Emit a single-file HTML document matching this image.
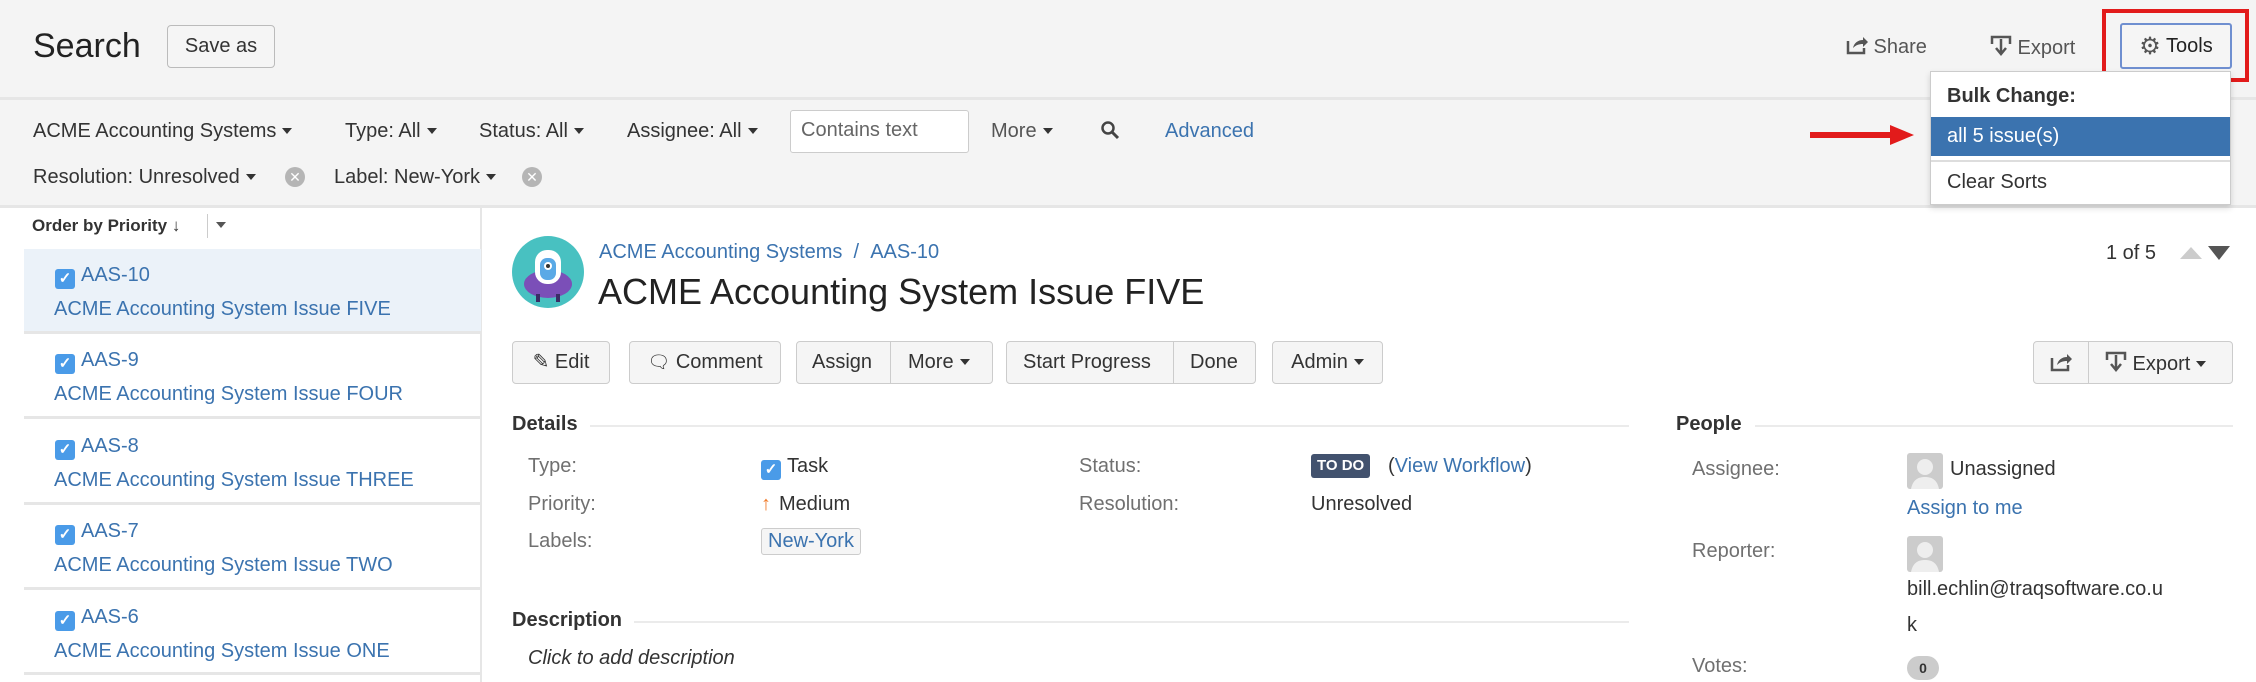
<!DOCTYPE html>
<html><head><meta charset="utf-8"><style>
*{box-sizing:border-box;margin:0;padding:0}
body{width:2256px;height:682px;overflow:hidden;background:#fff;font-family:"Liberation Sans",Arial,sans-serif;color:#333;position:relative}
.a{position:absolute;white-space:nowrap}
.f20{font-size:20px}
.link{color:#3b73af}
.btn{position:absolute;top:341px;height:43px;border:1px solid #ccc;border-radius:4px;background:#f5f5f5;font-size:20px;line-height:41px;text-align:center;color:#333}
.lbl{color:#707070;font-size:20px}
.cb{display:inline-block;width:20px;height:20px;background:#4a9be8;border-radius:3px;color:#fff;font-size:15px;line-height:20px;text-align:center;font-weight:bold;vertical-align:-2px;margin-right:6px}
.x{display:inline-block;width:20px;height:20px;border-radius:50%;background:#b5b5b5;color:#fff;font-size:14px;line-height:20px;text-align:center}
.tri{display:inline-block;border-left:5px solid transparent;border-right:5px solid transparent;border-top:6px solid #333;vertical-align:3px;margin-left:6px}
.item{position:absolute;left:24px;width:457px;height:85px;border-bottom:3px solid #e6e6e6}
</style></head><body>
<div class="a" style="left:0;top:0;width:2256px;height:100px;background:#f4f4f4;border-bottom:3px solid #e6e6e6"></div>
<div class="a" style="left:0;top:100px;width:2256px;height:108px;background:#f4f4f4;border-bottom:3px solid #e6e6e6"></div>
<div class="a" style="left:33px;top:27px;font-size:34px;color:#222">Search</div>
<div class="a" style="left:167px;top:25px;width:108px;height:43px;border:1px solid #bbb;border-radius:4px;background:#f5f5f5;font-size:20px;line-height:41px;text-align:center">Save as</div>
<div class="a f20" style="left:1846px;top:35px;color:#555"><svg width="22" height="20" viewBox="0 0 22 20" style="vertical-align:-2px"><path d="M2 6v12h16v-5" fill="none" stroke="#555" stroke-width="2.5"/><path d="M7 13c1-5 5-8 10-8V2l5 5-5 5V9c-4 0-7 1-10 4z" fill="#555"/></svg> Share</div>
<div class="a f20" style="left:1990px;top:35px;color:#555"><svg width="22" height="22" viewBox="0 0 22 22" style="vertical-align:-3px"><path d="M2 9V2h18v7" fill="none" stroke="#555" stroke-width="2.5"/><path d="M11 4v14M6 13l5 6 5-6" fill="none" stroke="#555" stroke-width="2.5"/></svg> Export</div>
<div class="a" style="left:2102px;top:9px;width:147px;height:73px;border:4px solid #e21b1b"></div>
<div class="a" style="left:2120px;top:23px;width:112px;height:46px;border:2px solid #6f8fd0;border-radius:3px;background:#f5f5f5;font-size:20px;line-height:42px;text-align:center;color:#222"><span style="font-size:24px;color:#555;vertical-align:-2px">⚙</span> Tools</div>
<div class="a" style="left:1930px;top:71px;width:301px;height:134px;background:#fff;border:1px solid #ccc;box-shadow:0 3px 6px rgba(0,0,0,.15)">
<div class="a" style="left:16px;top:13px;font-size:20px;font-weight:bold;color:#333">Bulk Change:</div>
<div class="a" style="left:0;top:45px;width:299px;height:39px;background:#3b73af;color:#fff;font-size:20px;line-height:38px;padding-left:16px">all 5 issue(s)</div>
<div class="a" style="left:0;top:88px;width:299px;border-top:2px solid #ddd"></div>
<div class="a" style="left:16px;top:99px;font-size:20px;color:#333">Clear Sorts</div>
</div>
<svg class="a" style="left:1808px;top:124px" width="108" height="22" viewBox="0 0 108 22"><path d="M2 8h80V1l24 10-24 10v-7H2z" fill="#e21b1b"/></svg>
<div class="a f20" style="left:33px;top:120px;color:#333">ACME Accounting Systems<span class="tri"></span></div>
<div class="a f20" style="left:345px;top:120px">Type: All<span class="tri"></span></div>
<div class="a f20" style="left:479px;top:120px">Status: All<span class="tri"></span></div>
<div class="a f20" style="left:627px;top:120px">Assignee: All<span class="tri"></span></div>
<div class="a" style="left:790px;top:110px;width:179px;height:43px;border:1px solid #ccc;border-radius:3px;background:#fff;font-size:20px;line-height:38px;padding-left:10px;color:#666">Contains text</div>
<div class="a f20" style="left:991px;top:120px;color:#555">More<span class="tri"></span></div>
<svg class="a" style="left:1100px;top:120px" width="20" height="20" viewBox="0 0 20 20"><circle cx="8" cy="8" r="5.5" fill="none" stroke="#444" stroke-width="2.5"/><path d="M12 12l6 6" stroke="#444" stroke-width="3"/></svg>
<div class="a f20 link" style="left:1165px;top:120px">Advanced</div>
<div class="a f20" style="left:33px;top:166px">Resolution: Unresolved<span class="tri"></span></div>
<div class="a" style="left:285px;top:167px"><span class="x">✕</span></div>
<div class="a f20" style="left:334px;top:166px">Label: New-York<span class="tri"></span></div>
<div class="a" style="left:522px;top:167px"><span class="x">✕</span></div>
<div class="a" style="left:480px;top:208px;width:2px;height:474px;background:#e6e6e6"></div>
<div class="a" style="left:32px;top:216px;font-size:17px;font-weight:bold;color:#333">Order by Priority ↓</div>
<div class="a" style="left:207px;top:214px;width:1px;height:24px;background:#ccc"></div>
<div class="a" style="left:216px;top:222px;border-left:5px solid transparent;border-right:5px solid transparent;border-top:6px solid #555"></div>
<div class="item" style="top:249px;background:#ebf2f9"></div>
<div class="item" style="top:334px"></div>
<div class="item" style="top:420px"></div>
<div class="item" style="top:505px"></div>
<div class="item" style="top:590px"></div>
<div class="a f20 link" style="left:55px;top:264px"><span class="cb">✓</span>AAS-10</div>
<div class="a f20 link" style="left:54px;top:298px">ACME Accounting System Issue FIVE</div>
<div class="a f20 link" style="left:55px;top:349px"><span class="cb">✓</span>AAS-9</div>
<div class="a f20 link" style="left:54px;top:383px">ACME Accounting System Issue FOUR</div>
<div class="a f20 link" style="left:55px;top:435px"><span class="cb">✓</span>AAS-8</div>
<div class="a f20 link" style="left:54px;top:469px">ACME Accounting System Issue THREE</div>
<div class="a f20 link" style="left:55px;top:520px"><span class="cb">✓</span>AAS-7</div>
<div class="a f20 link" style="left:54px;top:554px">ACME Accounting System Issue TWO</div>
<div class="a f20 link" style="left:55px;top:606px"><span class="cb">✓</span>AAS-6</div>
<div class="a f20 link" style="left:54px;top:640px">ACME Accounting System Issue ONE</div>
<svg class="a" style="left:512px;top:236px" width="72" height="72" viewBox="0 0 72 72"><circle cx="36" cy="36" r="36" fill="#48c1c1"/><ellipse cx="36" cy="48" rx="24" ry="14" fill="#7b4fb8"/><rect x="23" y="14" width="26" height="34" rx="12" fill="#fff"/><rect x="28" y="22" width="16" height="22" rx="7" fill="#5aa9e6"/><circle cx="36" cy="30" r="4" fill="#fff"/><circle cx="36" cy="30" r="2" fill="#333"/><rect x="24" y="58" width="4" height="8" fill="#3a2c66"/><rect x="44" y="58" width="4" height="8" fill="#3a2c66"/></svg>
<div class="a f20 link" style="left:599px;top:241px">ACME Accounting Systems &nbsp;/ &nbsp;AAS-10</div>
<div class="a" style="left:598px;top:271px;font-size:36px;color:#222">ACME Accounting System Issue FIVE</div>
<div class="a f20" style="left:2106px;top:242px">1 of 5</div>
<div class="a" style="left:2180px;top:247px;border-left:11px solid transparent;border-right:11px solid transparent;border-bottom:12px solid #ccc"></div>
<div class="a" style="left:2208px;top:246px;border-left:11px solid transparent;border-right:11px solid transparent;border-top:14px solid #555"></div>
<div class="btn" style="left:512px;width:98px">✎ Edit</div>
<div class="btn" style="left:629px;width:152px"><span style="font-size:18px">🗨</span> Comment</div>
<div class="btn" style="left:796px;width:197px"></div>
<div class="a f20" style="left:812px;top:351px">Assign</div>
<div class="a" style="left:890px;top:342px;width:1px;height:41px;background:#ccc"></div>
<div class="a f20" style="left:908px;top:351px">More<span class="tri"></span></div>
<div class="btn" style="left:1006px;width:250px"></div>
<div class="a f20" style="left:1023px;top:351px">Start Progress</div>
<div class="a" style="left:1173px;top:342px;width:1px;height:41px;background:#ccc"></div>
<div class="a f20" style="left:1190px;top:351px">Done</div>
<div class="btn" style="left:1272px;width:111px">Admin<span class="tri"></span></div>
<div class="btn" style="left:2033px;width:200px"></div>
<div class="a" style="left:2088px;top:342px;width:1px;height:41px;background:#ccc"></div>
<svg class="a" style="left:2050px;top:352px" width="22" height="20" viewBox="0 0 22 20"><path d="M2 6v12h16v-5" fill="none" stroke="#555" stroke-width="2.5"/><path d="M7 13c1-5 5-8 10-8V2l5 5-5 5V9c-4 0-7 1-10 4z" fill="#555"/></svg>
<div class="a f20" style="left:2105px;top:351px"><svg width="22" height="22" viewBox="0 0 22 22" style="vertical-align:-3px"><path d="M2 9V2h18v7" fill="none" stroke="#555" stroke-width="2.5"/><path d="M11 4v14M6 13l5 6 5-6" fill="none" stroke="#555" stroke-width="2.5"/></svg> Export<span class="tri"></span></div>
<div class="a" style="left:512px;top:413px;font-size:20px;font-weight:bold;color:#333">Details</div>
<div class="a" style="left:590px;top:425px;width:1039px;height:2px;background:#ebebeb"></div>
<div class="a" style="left:1676px;top:413px;font-size:20px;font-weight:bold;color:#333">People</div>
<div class="a" style="left:1755px;top:425px;width:478px;height:2px;background:#ebebeb"></div>
<div class="a lbl" style="left:528px;top:455px">Type:</div>
<div class="a lbl" style="left:528px;top:493px">Priority:</div>
<div class="a lbl" style="left:528px;top:530px">Labels:</div>
<div class="a f20" style="left:761px;top:455px"><span class="cb">✓</span>Task</div>
<div class="a f20" style="left:761px;top:493px"><span style="color:#f07a28;font-weight:bold;margin-right:8px">↑</span>Medium</div>
<div class="a" style="left:761px;top:528px;height:27px;padding:0 6px;border:1px solid #ccc;border-radius:3px;background:#f5f5f5;font-size:20px;line-height:25px" ><span class="link">New-York</span></div>
<div class="a lbl" style="left:1079px;top:455px">Status:</div>
<div class="a lbl" style="left:1079px;top:493px">Resolution:</div>
<div class="a" style="left:1311px;top:454px;height:24px;padding:0 6px;background:#42526e;color:#fff;font-size:15px;font-weight:bold;line-height:24px;border-radius:3px">TO DO</div>
<div class="a f20 link" style="left:1388px;top:455px"><span style="color:#333">(</span>View Workflow<span style="color:#333">)</span></div>
<div class="a f20" style="left:1311px;top:493px">Unresolved</div>
<div class="a" style="left:512px;top:609px;font-size:20px;font-weight:bold;color:#333">Description</div>
<div class="a" style="left:634px;top:621px;width:995px;height:2px;background:#ebebeb"></div>
<div class="a f20" style="left:528px;top:647px;font-style:italic">Click to add description</div>
<div class="a lbl" style="left:1692px;top:458px">Assignee:</div>
<div class="a lbl" style="left:1692px;top:540px">Reporter:</div>
<div class="a lbl" style="left:1692px;top:655px">Votes:</div>
<svg class="a" style="left:1907px;top:453px" width="36" height="36" viewBox="0 0 36 36"><rect width="36" height="36" rx="3" fill="#ccc"/><circle cx="18" cy="14" r="8" fill="#eee"/><path d="M4 36c2-10 8-12 14-12s12 2 14 12z" fill="#eee"/></svg>
<div class="a f20" style="left:1950px;top:458px">Unassigned</div>
<div class="a f20 link" style="left:1907px;top:497px">Assign to me</div>
<svg class="a" style="left:1907px;top:536px" width="36" height="36" viewBox="0 0 36 36"><rect width="36" height="36" rx="3" fill="#ccc"/><circle cx="18" cy="14" r="8" fill="#eee"/><path d="M4 36c2-10 8-12 14-12s12 2 14 12z" fill="#eee"/></svg>
<div class="a f20" style="left:1907px;top:578px">bill.echlin@traqsoftware.co.u</div>
<div class="a f20" style="left:1907px;top:614px">k</div>
<div class="a" style="left:1907px;top:656px;width:32px;height:24px;border-radius:12px;background:#ccc;font-size:14px;font-weight:bold;text-align:center;line-height:24px">0</div>
</body></html>
